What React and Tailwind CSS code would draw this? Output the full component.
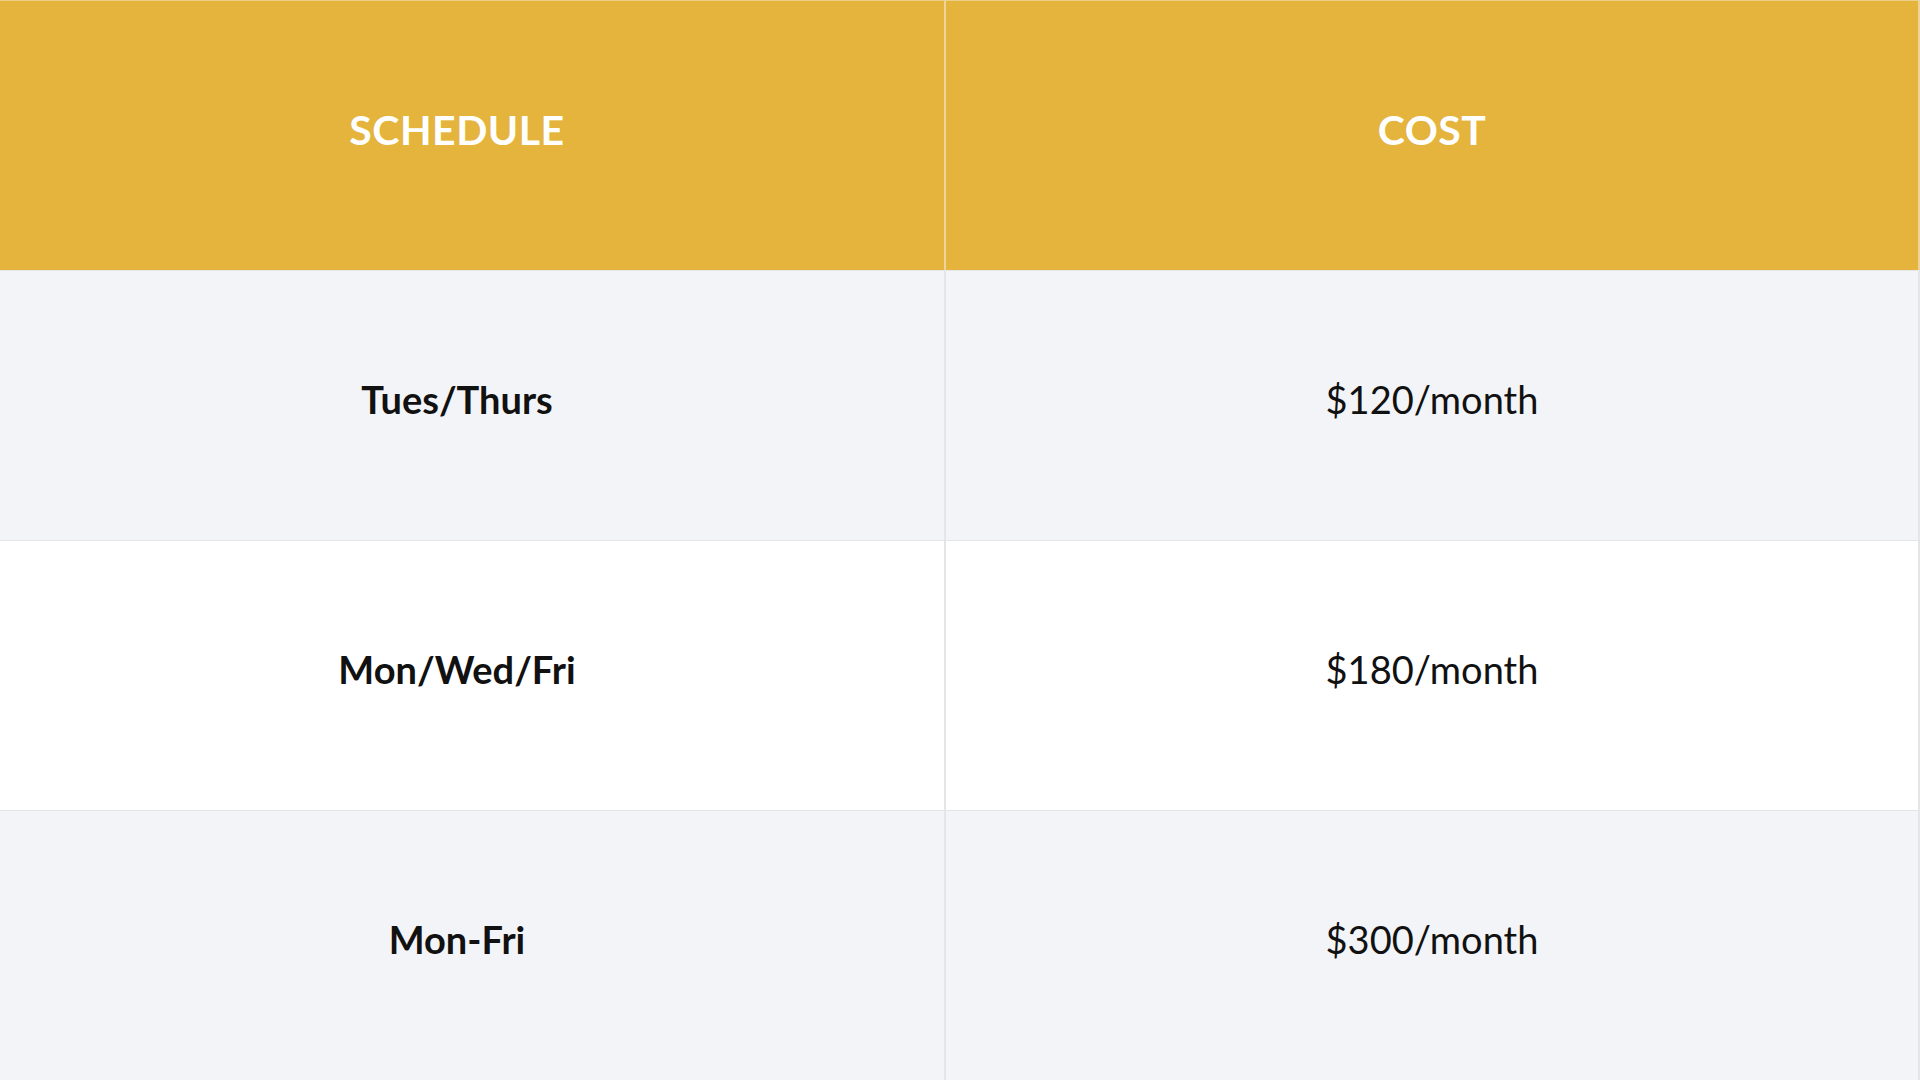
export default function App() {
  const rows = [
    ["Tues/Thurs", "$120/month", "bg-[#f3f4f8]"],
    ["Mon/Wed/Fri", "$180/month", "bg-white"],
    ["Mon-Fri", "$300/month", "bg-[#f3f4f8]"],
  ];
  return (
    <div className="w-[1920px] h-[1080px] grid grid-cols-[946px_974px] grid-rows-[270px_270px_270px_270px] font-['Lato',sans-serif]">
      <div className="bg-[#e4b43c] border-t border-[#ecd08a] border-r-2 border-r-[#ecd49a] flex items-center justify-center pr-[30px] pb-[12px] text-white text-[41px] font-bold tracking-[0.5px]">
        SCHEDULE
      </div>
      <div className="bg-[#e4b43c] border-t border-[#ecd08a] border-r-2 border-r-[#ecd49a] flex items-center justify-center pb-[12px] text-white text-[41px] font-bold tracking-[0.5px]">
        COST
      </div>
      {rows.map(([a, b, bg]) => (
        <>
          <div key={a} className={`${bg} border-t border-r-2 border-[#e4e5e9] flex items-center justify-center pr-[30px] pb-[13px] text-[#111] text-[38px] font-bold`}>
            {a}
          </div>
          <div key={b} className={`${bg} border-t border-r-2 border-[#e4e5e9] flex items-center justify-center pb-[13px] text-[#111] text-[38px] font-normal`}>
            {b}
          </div>
        </>
      ))}
    </div>
  );
}
